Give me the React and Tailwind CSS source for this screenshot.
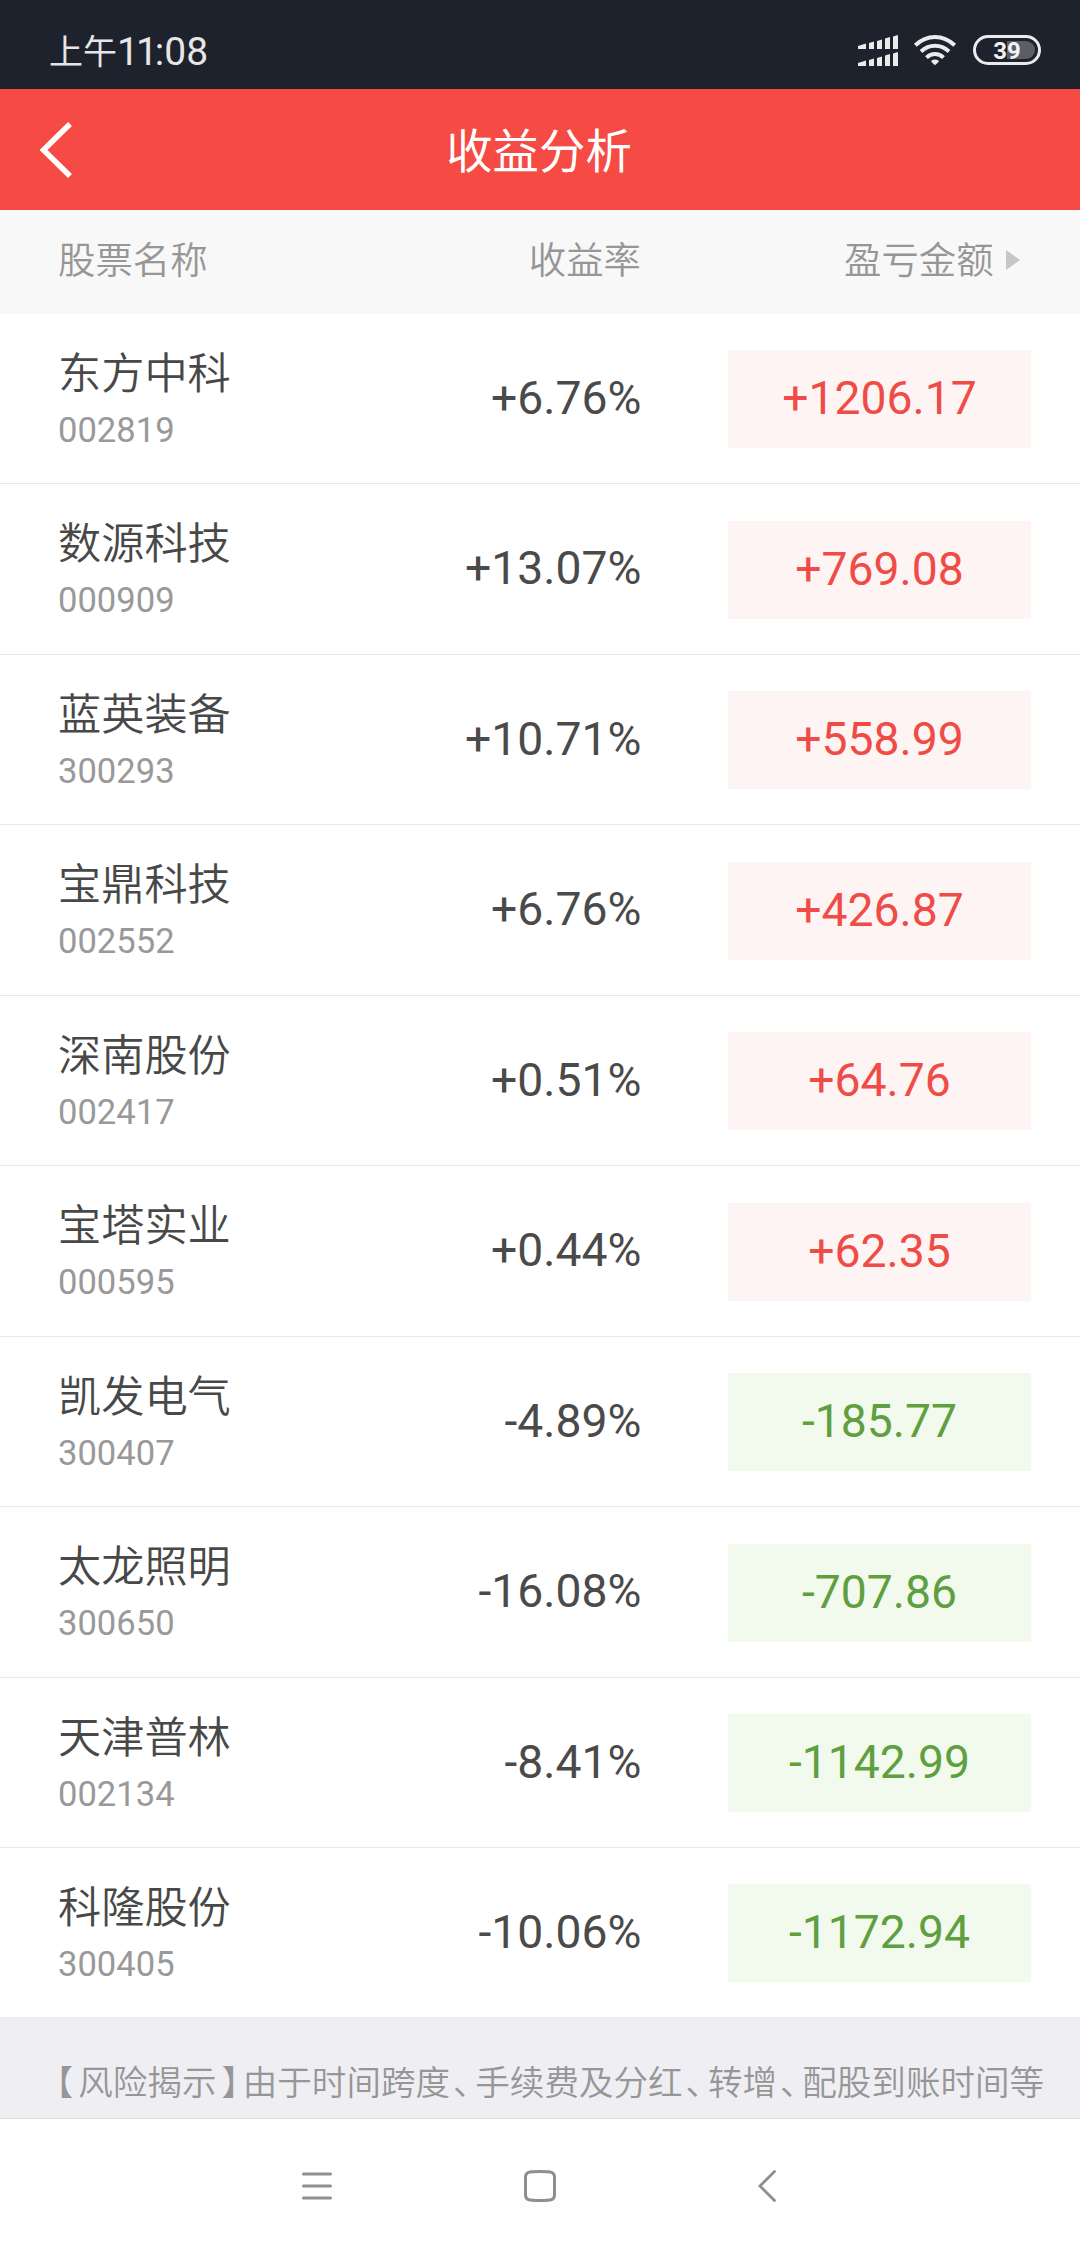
const stocks = [
  { name: '东方中科', code: '002819', rate: '+6.76%', amount: '+1206.17' },
  { name: '数源科技', code: '000909', rate: '+13.07%', amount: '+769.08' },
  { name: '蓝英装备', code: '300293', rate: '+10.71%', amount: '+558.99' },
  { name: '宝鼎科技', code: '002552', rate: '+6.76%', amount: '+426.87' },
  { name: '深南股份', code: '002417', rate: '+0.51%', amount: '+64.76' },
  { name: '宝塔实业', code: '000595', rate: '+0.44%', amount: '+62.35' },
  { name: '凯发电气', code: '300407', rate: '-4.89%', amount: '-185.77' },
  { name: '太龙照明', code: '300650', rate: '-16.08%', amount: '-707.86' },
  { name: '天津普林', code: '002134', rate: '-8.41%', amount: '-1142.99' },
  { name: '科隆股份', code: '300405', rate: '-10.06%', amount: '-1172.94' },
];

// Signal, wifi and battery
const StatusIcons = () => (
  <svg width="186" height="34" viewBox="0 0 186 34" className="mt-[33px]">
    <g fill="#ebebeb">
      <path d="M1 13l8-2.500V16H1zM12 10l5-1.400V16h-5zM20 8l5-1.400V16h-5zM28 5.500l5-1.400V16h-5zM36 3.500L41 2v14h-5z" />
      <path d="M1 30l8-2.600V33H1zM12 27l5-1.400V33h-5zM20 25l5-1.400V33h-5zM28 22.500l5-1.400V33h-5zM36 20.500L41 19v14h-5z" />
      <path d="M78 32.300l-3.800-3.600c0-3 7.600-3 7.600 0z" />
    </g>
    <g fill="none" stroke="#ebebeb" strokeWidth="4">
      <path d="M58.300 12.200c11.800-11 27.600-11 39.400 0" />
      <path d="M64 18.500c8.300-7.600 19.700-7.600 28 0" />
      <path d="M69.500 24.600c5-4.800 12-4.800 17 0" />
    </g>
    <path d="M150 8h19a9 9 0 010 18h-19z" fill="#5b5e66" />
    <rect x="117.500" y="3.500" width="65" height="27" rx="13.500" fill="none" stroke="#ebebeb" strokeWidth="3" />
    <text x="150" y="26" textAnchor="middle" fontFamily="Roboto, sans-serif" fontWeight="700" fontSize="24" fill="#f2f2f2">39</text>
  </svg>
);

const StatusBar = () => (
  <div className="flex h-[89px] justify-between bg-[#1e222c] pl-[49px] pr-[37px] text-[#e6e6e6]">
    <div className="flex pt-[29px] text-[39px] leading-[46px]">
      <span className="text-[34px]">上午</span>
      <span className="tracking-[-3px]">11</span>
      <span>:08</span>
    </div>
    <StatusIcons />
  </div>
);

const TitleBar = () => (
  <div className="grid h-[121px] grid-cols-3 items-center bg-[#f64a44] text-white">
    <svg width="36" height="60" viewBox="0 0 36 60" className="ml-[38px]" fill="none" stroke="currentColor" strokeWidth="5.500">
      <path d="M32 4L5.500 30 32 56" />
    </svg>
    <h1 className="-ml-[2px] pt-[4px] text-center text-[46.400px] leading-[60px]">收益分析</h1>
  </div>
);

const TableHead = () => (
  <div className="flex h-[104px] bg-[#f8f8f8] pl-[58px] pt-[26px] text-[37.400px] font-[350] leading-[50px] text-[#969696]">
    <div className="w-[240px]">股票名称</div>
    <div className="w-[343px] text-right">收益率</div>
    <div className="ml-[203px]">盈亏金额</div>
    <svg width="14" height="22" viewBox="0 0 14 22" className="ml-3 mt-[13px]">
      <path d="M0 1l14 10L0 21z" fill="#c6c6c6" />
    </svg>
  </div>
);

const StockRow = ({ stock }) => {
  const isProfit = stock.amount.startsWith('+');
  return (
    <div className="flex h-[170.450px] border-b border-[#e9e9e9] pl-[58px]">
      <div className="w-[240px] pt-[37px]">
        <div className="text-[43.200px] font-[350] leading-[48px] text-[#484848]">{stock.name}</div>
        <div className="mt-[11px] text-[34.600px] leading-[40px] text-[#999]">{stock.code}</div>
      </div>
      <div className="mt-[35px] w-[343.500px] text-right text-[46.300px] leading-[98px] text-[#4a4a4a]">{stock.rate}</div>
      <div
        className={`ml-[86.500px] mt-[36.450px] h-[98px] w-[303px] text-center text-[46.300px] leading-[97px] ${
          isProfit ? 'bg-[#fef4f3] text-[#ef4c47]' : 'bg-[#f2f9ed] text-[#5f9f3f]'
        }`}
      >
        {stock.amount}
      </div>
    </div>
  );
};

// Full-width punctuation set on its narrow form
const Mark = ({ className, children }) => (
  <span className={`inline-block [font-feature-settings:'halt'] ${className}`}>{children}</span>
);

const RiskNotice = () => (
  <div className="h-[100.500px] overflow-hidden whitespace-nowrap border-b border-[#e0e0e0] bg-[#efeef3] pl-[56px] pt-[40px] text-[34.560px] font-[350] leading-[50px] text-[#969696]">
    <Mark className="mr-[5px]">【</Mark>风险揭示<Mark className="ml-[5px] mr-[4px]">】</Mark>
    由于时间跨度<Mark className="ml-[3px] mr-[5px]">、</Mark>手续费及分红<Mark className="ml-[3px] mr-[5px]">、</Mark>
    转增<Mark className="ml-[3px] mr-[5px]">、</Mark>配股到账时间等
  </div>
);

// Android navigation buttons
const NavBar = () => (
  <div className="flex h-[129px] items-center bg-[#fefefe] pl-[301px] pt-[5px] text-[#8e8e8e]">
    <svg width="32" height="32" viewBox="0 0 32 32" fill="none" stroke="currentColor" strokeWidth="3" strokeLinecap="round">
      <path d="M2.500 4h27M2.500 16h27M2.500 28h27" />
    </svg>
    <svg width="34" height="34" viewBox="0 0 34 34" className="ml-[190px]" fill="none" stroke="currentColor" strokeWidth="3">
      <path d="M17 2.500C28.500 2.500 31.500 3 31.500 8V26C31.500 31 28.500 31.500 17 31.500S2.500 31 2.500 26V8C2.500 3 5.500 2.500 17 2.500z" />
    </svg>
    <svg width="20" height="34" viewBox="0 0 20 34" className="ml-[200px]" fill="none" stroke="currentColor" strokeWidth="2.800" strokeLinecap="round">
      <path d="M17.500 2.500L3 17l14.500 14.500" />
    </svg>
  </div>
);

export default function App() {
  return (
    <div className="h-[2248px] w-[1080px] overflow-hidden bg-white font-[Roboto,'Noto_Sans_CJK_SC',sans-serif]" lang="zh-CN">
      <StatusBar />
      <TitleBar />
      <TableHead />
      {stocks.map((stock) => (
        <StockRow key={stock.code} stock={stock} />
      ))}
      <RiskNotice />
      <NavBar />
    </div>
  );
}
